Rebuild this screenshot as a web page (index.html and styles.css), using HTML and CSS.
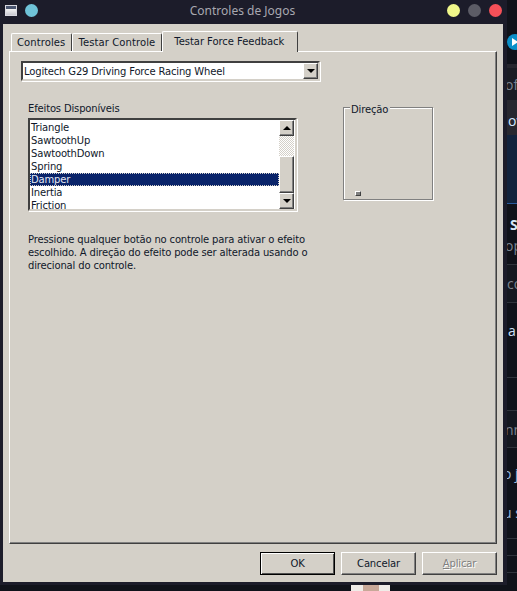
FILE: index.html
```html
<!DOCTYPE html>
<html lang="pt">
<head>
    <meta charset="UTF-8">
    <title>Controles de Jogos</title>
    <link rel="stylesheet" href="styles.css">
</head>
<body>
    <div class="backdrop">
        <div class="bg-row bg-play-row"><span class="bg-play"><span class="bg-play-arrow"></span></span></div>
        <div class="bg-row bg-band"></div>
        <div class="bg-row bg-of">of</div>
        <div class="bg-row bg-ov">ov</div>
        <div class="bg-row bg-navy"></div>
        <div class="bg-row bg-s"><b>S</b><br>op</div>
        <div class="bg-row bg-co">co</div>
        <div class="bg-row bg-a">a</div>
        <div class="bg-row bg-empty"></div>
        <div class="bg-row bg-nn">nn</div>
        <div class="bg-row bg-oj">o j<br>u s</div>
        <div class="bg-row bg-thin"></div>
        <div class="bg-row bg-thin"></div>
    </div>
    <div class="bg-photo"></div>

    <div class="window">
        <div class="titlebar">
            <div class="title-group">
                <span class="app-icon"></span>
                <span class="dot dot-blue"></span>
            </div>
            <div class="title-text">Controles de Jogos</div>
            <div class="title-group">
                <span class="dot dot-yellow"></span>
                <span class="dot dot-grey"></span>
                <span class="dot dot-red"></span>
            </div>
        </div>

        <div class="dialog">
            <div class="tabs">
                <div class="tab">Controles</div>
                <div class="tab">Testar Controle</div>
                <div class="tab tab-active">Testar Force Feedback</div>
            </div>

            <div class="panel">
                <div class="combo">
                    <div class="combo-text">Logitech G29 Driving Force Racing Wheel</div>
                    <div class="scroll-btn combo-btn"><span class="arrow-down"></span></div>
                </div>

                <div class="effects-row">
                    <div class="effects">
                        <div class="effects-label">Efeitos Disponíveis</div>
                        <div class="listbox">
                            <div class="list-items">
                                <div class="list-item">Triangle</div>
                                <div class="list-item">SawtoothUp</div>
                                <div class="list-item">SawtoothDown</div>
                                <div class="list-item">Spring</div>
                                <div class="list-item selected">Damper</div>
                                <div class="list-item">Inertia</div>
                                <div class="list-item">Friction</div>
                            </div>
                            <div class="scrollbar">
                                <div class="scroll-btn"><span class="arrow-up"></span></div>
                                <div class="scroll-track"></div>
                                <div class="scroll-thumb"></div>
                                <div class="scroll-btn"><span class="arrow-down"></span></div>
                            </div>
                        </div>
                    </div>

                    <div class="direction">
                        <div class="direction-label">Direção</div>
                        <span class="direction-handle"></span>
                    </div>
                </div>

                <p class="hint">Pressione qualquer botão no controle para ativar o efeito escolhido. A direção do efeito pode ser alterada usando o direcional do controle.</p>
            </div>

            <div class="buttons">
                <div class="button button-default">OK</div>
                <div class="button">Cancelar</div>
                <div class="button button-disabled"><span><u>A</u>plicar</span></div>
            </div>
        </div>
    </div>
</body>
</html>
```

FILE: styles.css
```css
* {
    box-sizing: border-box;
}
html, body {
    margin: 0;
    height: 100%;
    overflow: hidden;
}
body {
    position: relative;
    background: #10121a;
    font-family: "DejaVu Sans", sans-serif;
    font-size: 10px;
    letter-spacing: -0.16px;
    color: #10182a;
}

/* janela de tras */
.backdrop {
    position: absolute;
    left: 490px;
    top: 0;
    width: 27px;
    height: 591px;
    color: #7c8490;
    font-family: "Open Sans", sans-serif;
    font-size: 14px;
    letter-spacing: 0;
    overflow: hidden;
}
.bg-row {
    white-space: nowrap;
    border-bottom: 1px solid transparent;
}
.bg-play-row { height: 64px; padding: 34px 0 0 17px; }
.bg-band { height: 4px; background: #26262e; border: 0; }
.bg-of { height: 32px; padding-left: 15px; line-height: 34px; background: #1a1c24; border: 0; }
.bg-ov { height: 35px; padding-left: 18px; line-height: 42px; background: #282830; color: #d4e6ff; border: 0; }
.bg-navy { height: 69px; background: #12233d; border-bottom-color: #2a5a9c; }
.bg-s { height: 61px; padding: 10px 0 0 15px; line-height: 21px; border-bottom-color: #30343c; }
.bg-s b { margin-left: 5px; color: #d8e8f8; }
.bg-co { height: 38px; padding-left: 17px; line-height: 38px; background: #151820; border-bottom-color: #30343c; }
.bg-a { height: 75px; padding: 19px 0 0 18px; line-height: 18px; color: #cfe0f8; border-bottom-color: #30343c; }
.bg-empty { height: 33px; border-bottom-color: #30343c; }
.bg-nn { height: 37px; padding-left: 15px; line-height: 37px; background: #151820; border-bottom-color: #30343c; }
.bg-oj { height: 91px; padding: 6px 0 0 13px; line-height: 39px; color: #9cb8dc; border-bottom-color: #30343c; }
.bg-thin { height: 17px; border-bottom-color: #30343c; }
.bg-play {
    display: flex;
    align-items: center;
    justify-content: center;
    width: 16px;
    height: 16px;
    border-radius: 50%;
    background: #0b8fc8;
}
.bg-play-arrow {
    width: 0;
    height: 0;
    border-left: 6px solid #fff;
    border-top: 4px solid transparent;
    border-bottom: 4px solid transparent;
}
.bg-photo {
    position: absolute;
    left: 351px;
    top: 584px;
    width: 39px;
    height: 7px;
    background: linear-gradient(90deg, #f0ece8 0 30%, #c8a898 30% 72%, #f0ece8 72%);
}

/* janela */
.window {
    position: absolute;
    left: 0;
    top: 0;
    width: 507px;
    height: 585px;
    background: #1c1c2a;
    display: flex;
    flex-direction: column;
}
.titlebar {
    position: relative;
    height: 24px;
    display: flex;
    align-items: center;
    justify-content: space-between;
    padding: 0 5px 3px 5px;
}
.title-group {
    display: flex;
    align-items: center;
    gap: 8px;
}
.title-text {
    position: absolute;
    left: 0;
    right: 22px;
    top: 2px;
    text-align: center;
    font-family: "Noto Sans", sans-serif;
    font-size: 12px;
    letter-spacing: 0;
    color: #a8a8b0;
}
.app-icon {
    width: 12px;
    height: 11px;
    background: linear-gradient(#4a5570 0 3px, #f4f4f4 3px, #c8c8d0);
    border: 1px solid #d8d8e0;
}
.dot {
    width: 13px;
    height: 13px;
    border-radius: 50%;
}
.dot-blue { background: #6fc3d8; }
.dot-yellow { background: #f0f78a; }
.dot-grey { background: #5c5c66; }
.dot-red { background: #f65058; }

.dialog {
    flex: 1;
    margin: 0 4px 3px 3px;
    background: #d4d0c8;
    padding: 6px 6px 0 6px;
    display: flex;
    flex-direction: column;
}
.tabs {
    display: flex;
    align-items: flex-end;
    height: 21px;
    padding-left: 2px;
    position: relative;
    z-index: 1;
}
.tab {
    height: 18px;
    padding: 3px 6px 0 5px;
    border: 1px solid #fff;
    border-right: 1px solid #404040;
    border-bottom: 0;
    border-radius: 2px 2px 0 0;
    white-space: nowrap;
    letter-spacing: 0.1px;
}
.tab-active {
    height: 21px;
    padding: 4px 13px 0 11px;
    margin-bottom: -1px;
    background: #d4d0c8;
    letter-spacing: -0.05px;
}
.panel {
    flex: 1;
    border: 1px solid #fff;
    border-right: 1px solid #404040;
    border-bottom: 1px solid #404040;
    box-shadow: inset -1px -1px 0 #808080;
    padding: 9px 11px 0 11px;
}
.combo {
    width: 299px;
    height: 20px;
    display: flex;
    background: #fff;
    border: 2px solid #404040;
    border-right-color: #d4d0c8;
    border-bottom-color: #d4d0c8;
    box-shadow: 1px 1px 0 #fff;
}
.combo-text {
    flex: 1;
    padding: 3px 0 0 1px;
}
.combo-btn {
    width: 16px;
    height: 16px;
}
.effects-row {
    display: flex;
    margin-top: 22px;
    padding-left: 7px;
}
.effects {
    width: 269px;
}
.effects-label {
    height: 15px;
}
.listbox {
    height: 93px;
    display: flex;
    border: 2px solid #404040;
    border-right-color: #d4d0c8;
    border-bottom-color: #d4d0c8;
    box-shadow: 1px 1px 0 #fff;
    background: #fff;
}
.list-items {
    flex: 1;
    line-height: 13px;
    padding-top: 1px;
}
.list-item {
    height: 13px;
    padding-left: 1px;
}
.selected {
    background: #0a246a;
    color: #e4e8f4;
    outline: 1px dotted #d4d0c8;
    outline-offset: -1px;
}
.scrollbar {
    width: 15px;
    margin-right: 1px;
    display: flex;
    flex-direction: column;
}
.scroll-btn {
    width: 15px;
    height: 16px;
    background: #d4d0c8;
    border: 1px solid;
    border-color: #fff #404040 #404040 #fff;
    box-shadow: inset -1px -1px 0 #808080;
    display: flex;
    align-items: center;
    justify-content: center;
}
.scroll-track {
    height: 20px;
    background: repeating-conic-gradient(#d4d0c8 0 25%, #fff 0 50%) 0 0 / 2px 2px;
}
.scroll-thumb {
    flex: 1;
    background: #d4d0c8;
    border: 1px solid;
    border-color: #fff #404040 #404040 #fff;
    box-shadow: inset -1px -1px 0 #808080;
}
.arrow-down, .arrow-up {
    width: 0;
    height: 0;
    border-left: 4px solid transparent;
    border-right: 4px solid transparent;
}
.arrow-down { border-top: 4px solid #000; }
.arrow-up { border-bottom: 4px solid #000; }
.direction {
    position: relative;
    width: 90px;
    height: 93px;
    margin: 4px 0 0 46px;
    border: 1px solid #808080;
    box-shadow: 1px 1px 0 #fff, inset 1px 1px 0 #fff;
}
.direction-label {
    position: absolute;
    left: 6px;
    top: -4px;
    padding: 0 2px 0 1px;
    background: #d4d0c8;
}
.direction-handle {
    position: absolute;
    left: 11px;
    bottom: 3px;
    width: 6px;
    height: 5px;
    background: #808080;
    border: 1px solid;
    border-color: #fff #404040 #404040 #fff;
}
.hint {
    margin: 22px 0 0 7px;
    width: 290px;
    line-height: 13px;
}
.buttons {
    height: 38px;
    display: flex;
    justify-content: flex-end;
    gap: 6px;
    padding: 8px 0 0 0;
}
.button {
    width: 75px;
    height: 23px;
    display: flex;
    align-items: center;
    justify-content: center;
    border: 1px solid;
    border-color: #fff #404040 #404040 #fff;
    box-shadow: inset -1px -1px 0 #808080;
}
.button-default {
    border-color: #000;
    box-shadow: inset 1px 1px 0 #fff, inset -1px -1px 0 #505050;
}
.button-disabled {
    color: #808080;
    text-shadow: 1px 1px 0 #fff;
}
```
